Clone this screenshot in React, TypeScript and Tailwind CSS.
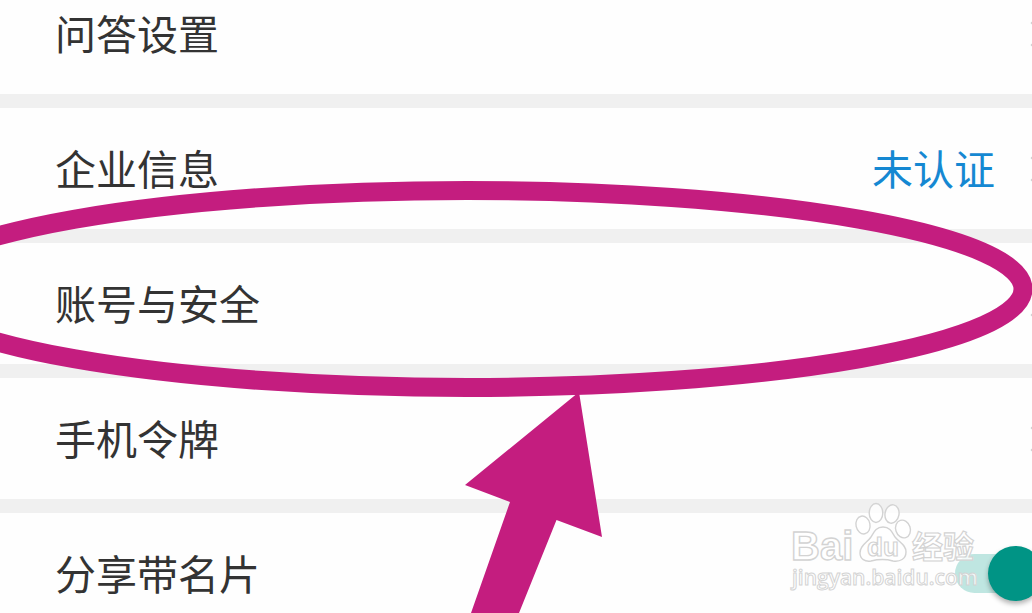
import type { ReactNode } from "react";

function Chevron() {
  return (
    <svg
      viewBox="0 0 16 28"
      aria-hidden="true"
      className="-mr-3.5 ml-[35px] h-7 w-4 shrink-0 fill-none stroke-[#cfcfcf] stroke-3"
    >
      <path d="M1.5 2 13.5 14 1.5 26" />
    </svg>
  );
}

const rowClass =
  "flex h-[121px] w-full shrink-0 items-center overflow-hidden bg-[#fefefe] pl-[55px] text-left";

function LinkRow({ label, value }: { label: string; value?: ReactNode }) {
  return (
    <button type="button" className={rowClass}>
      <span className="grow pb-1">{label}</span>
      {value && <span className="pb-1 text-[#1588d2]">{value}</span>}
      <Chevron />
    </button>
  );
}

function ToggleRow({ label }: { label: string }) {
  return (
    <label className={rowClass}>
      <span className="grow pb-1">{label}</span>
      <span className="relative -mr-3 flex h-14 w-[89px] shrink-0 items-center justify-end">
        <input type="checkbox" defaultChecked className="peer sr-only" />
        <span className="absolute inset-x-0 h-[39px] rounded-full bg-gray-200 peer-checked:bg-[#bfe6e1]" />
        <span className="relative mr-[1px] size-[55px] rounded-full bg-gray-400 shadow-[0_3px_5px_rgba(0,0,0,0.3)] peer-checked:bg-[#009485]" />
      </span>
    </label>
  );
}

function Annotation() {
  return (
    <svg
      viewBox="0 0 1032 613"
      width="1032"
      height="613"
      aria-hidden="true"
      className="pointer-events-none absolute top-0 left-0 max-w-none"
    >
      <ellipse cx="467" cy="289" rx="556" ry="98.5" fill="none" stroke="#c41d7f" strokeWidth="19" />
      <path d="M579 392 465 485 510 502 471 613 519 613 556.5 520 602 537Z" fill="#c41d7f" />
    </svg>
  );
}

function Watermark() {
  return (
    <svg
      viewBox="0 0 200 96"
      width="200"
      height="96"
      role="img"
      aria-label="Baidu 经验"
      className="pointer-events-none absolute right-[47px] bottom-[16px] fill-white/80 stroke-[#d3d3d3] [font-family:'Liberation_Sans','Noto_Sans_CJK_SC',sans-serif]"
      strokeWidth="1.4"
    >
      <text x="6" y="59" fontSize="40" fontWeight="700">
        Bai
      </text>
      <ellipse cx="78" cy="24" rx="7" ry="9" transform="rotate(-12 78 24)" />
      <ellipse cx="91" cy="12" rx="6.8" ry="9.5" />
      <ellipse cx="107" cy="13" rx="7" ry="9.3" transform="rotate(10 107 13)" />
      <ellipse cx="118" cy="28" rx="7.3" ry="9" transform="rotate(-18 118 28)" />
      <path d="M98 26C91 26 89 31 86 36C82 42 75 44 75 52C75 58 80 61 86 60C94 58 101 58 108 60C115 61 121 58 121 51C121 44 115 42 110 36C107 31 105 26 98 26Z" />
      <text x="82" y="55" fontSize="26" fontWeight="700" strokeWidth="1.2">
        du
      </text>
      <text x="127" y="57" fontSize="31" fontWeight="700" strokeWidth="1.2">
        经验
      </text>
      <text
        x="7"
        y="84"
        fontSize="21"
        fontWeight="600"
        strokeWidth="1"
        className="[font-family:'Open_Sans',sans-serif]"
      >
        jingyan.baidu.com
      </text>
    </svg>
  );
}

export default function App() {
  return (
    <main
      lang="zh-CN"
      className="relative h-screen overflow-hidden bg-[#f0f0f0] text-[41px] leading-[60px] text-[#333333] [font-family:'Noto_Sans_CJK_SC',sans-serif]"
    >
      <div className="-mt-[27px] flex flex-col gap-3.5">
        <LinkRow label="问答设置" />
        <LinkRow label="企业信息" value="未认证" />
        <LinkRow label="账号与安全" />
        <LinkRow label="手机令牌" />
        <ToggleRow label="分享带名片" />
      </div>
      <Annotation />
      <Watermark />
    </main>
  );
}
